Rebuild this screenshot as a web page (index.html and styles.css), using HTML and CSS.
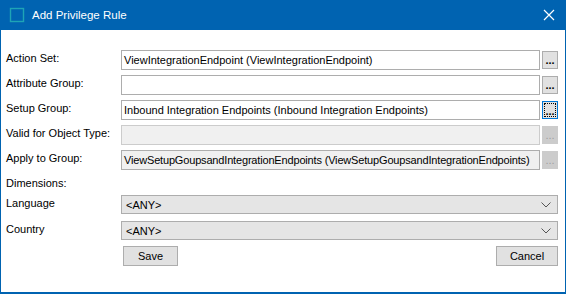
FILE: index.html
```html
<!DOCTYPE html>
<html>
<head>
<meta charset="utf-8">
<link rel="stylesheet" href="styles.css">
</head>
<body>
<div class="window">
  <div class="titlebar">
    <svg class="app-icon" width="16" height="16" viewBox="0 0 16 16"><rect x="1.5" y="1.5" width="13" height="13" fill="none" stroke="#1ea4b6" stroke-width="1.4"/></svg>
    <span class="title">Add Privilege Rule</span>
    <svg class="close" width="12" height="12" viewBox="0 0 12 12"><path d="M1 1L11 11M11 1L1 11" stroke="#fff" stroke-width="1.2"/></svg>
  </div>
  <div class="content">
    <div class="form">
      <label class="lbl">Action Set:</label>
      <div class="field"><div class="input">ViewIntegrationEndpoint (ViewIntegrationEndpoint)</div><button class="dots">...</button></div>

      <label class="lbl">Attribute Group:</label>
      <div class="field"><div class="input"></div><button class="dots">...</button></div>

      <label class="lbl">Setup Group:</label>
      <div class="field"><div class="input">Inbound Integration Endpoints (Inbound Integration Endpoints)</div><button class="dots focus"><span>...</span></button></div>

      <label class="lbl">Valid for Object Type:</label>
      <div class="field"><div class="input disabled"></div><button class="dots disabled">...</button></div>

      <label class="lbl">Apply to Group:</label>
      <div class="field"><div class="input readonly tight">ViewSetupGoupsandIntegrationEndpoints (ViewSetupGoupsandIntegrationEndpoints)</div><button class="dots disabled">...</button></div>

      <label class="lbl">Dimensions:</label>
      <div class="field"></div>
    </div>
    <div class="form dims">
      <label class="lbl">Language</label>
      <div class="combo"><span>&lt;ANY&gt;</span><svg width="10" height="6" viewBox="0 0 10 6"><path d="M0.5 0.5L5 5L9.5 0.5" fill="none" stroke="#555" stroke-width="1"/></svg></div>

      <label class="lbl">Country</label>
      <div class="combo"><span>&lt;ANY&gt;</span><svg width="10" height="6" viewBox="0 0 10 6"><path d="M0.5 0.5L5 5L9.5 0.5" fill="none" stroke="#555" stroke-width="1"/></svg></div>
    </div>
    <div class="actions">
      <button class="btn">Save</button>
      <button class="btn">Cancel</button>
    </div>
  </div>
</div>
</body>
</html>
```
FILE: styles.css
```css
* { box-sizing: border-box; }
html, body { margin: 0; padding: 0; background: #fff; }
body {
  width: 566px;
  height: 294px;
  overflow: hidden;
  font-family: "Liberation Sans", Arial, sans-serif;
  font-size: 11px;
  color: #000;
}
.window {
  width: 566px;
  height: 294px;
  border: 1px solid #0063b1;
  border-top: 0;
  border-bottom-width: 2px;
  display: flex;
  flex-direction: column;
  overflow: hidden;
}
.titlebar {
  height: 30px;
  background: #0063b1;
  display: flex;
  align-items: center;
  padding-left: 8px;
  padding-right: 10px;
  color: #fff;
  flex-shrink: 0;
}
.app-icon { margin-right: 7px; }
.title { font-size: 11.5px; flex: 1; }
.content {
  padding: 20px 7px 0 5px;
  display: flex;
  flex-direction: column;
  min-width: 0;
}
.form {
  display: grid;
  grid-template-columns: 115px minmax(0, 1fr);
  grid-auto-rows: 20px;
  row-gap: 5px;
}
.form.dims {
  grid-auto-rows: 19px;
  row-gap: 7px;
}
.lbl {
  padding-top: 1px;
  line-height: 14px;
  white-space: nowrap;
}
.field {
  display: flex;
  align-items: stretch;
  gap: 2px;
  min-width: 0;
}
.input {
  flex: 1;
  min-width: 0;
  border: 1px solid #adadad;
  background: #fff;
  padding: 1px 2px 0;
  line-height: 17px;
  white-space: nowrap;
  overflow: hidden;
}
.input.tight { letter-spacing: -0.17px; }
.input.disabled { background: #f0f0f0; border-color: #cccccc; }
.input.readonly { background: #f0f0f0; border-color: #adadad; }
.dots {
  flex: 0 0 16px;
  width: 16px;
  margin: 1px 0;
  padding: 0 0 2px 0;
  border: 1px solid #adadad;
  background: #e1e1e1;
  font: inherit;
  font-weight: bold;
  font-size: 11px;
  line-height: 12px;
  color: #000;
  display: flex;
  align-items: flex-end;
  justify-content: center;
}
.dots.disabled { background: #cccccc; border-color: #cccccc; color: #a0a0a0; font-weight: normal; }
.dots.focus { border: 1px solid #0078d7; padding: 1px; }
.dots.focus span {
  flex: 1;
  align-self: stretch;
  border: 1px dotted #000;
  display: flex;
  align-items: flex-end;
  justify-content: center;
  line-height: 10px;
}
.combo {
  border: 1px solid #adadad;
  background: #e5e5e5;
  display: flex;
  align-items: center;
  justify-content: space-between;
  padding: 1px 6px 0 4px;
  line-height: 16px;
  min-width: 0;
}
.actions {
  display: flex;
  justify-content: space-between;
  padding-left: 117px;
  margin-top: 6px;
}
.btn {
  height: 20px;
  border: 1px solid #adadad;
  background: #e1e1e1;
  font: inherit;
  padding: 0;
  color: #000;
}
.actions .btn:first-child { width: 55px; }
.actions .btn:last-child { width: 62px; }
```
